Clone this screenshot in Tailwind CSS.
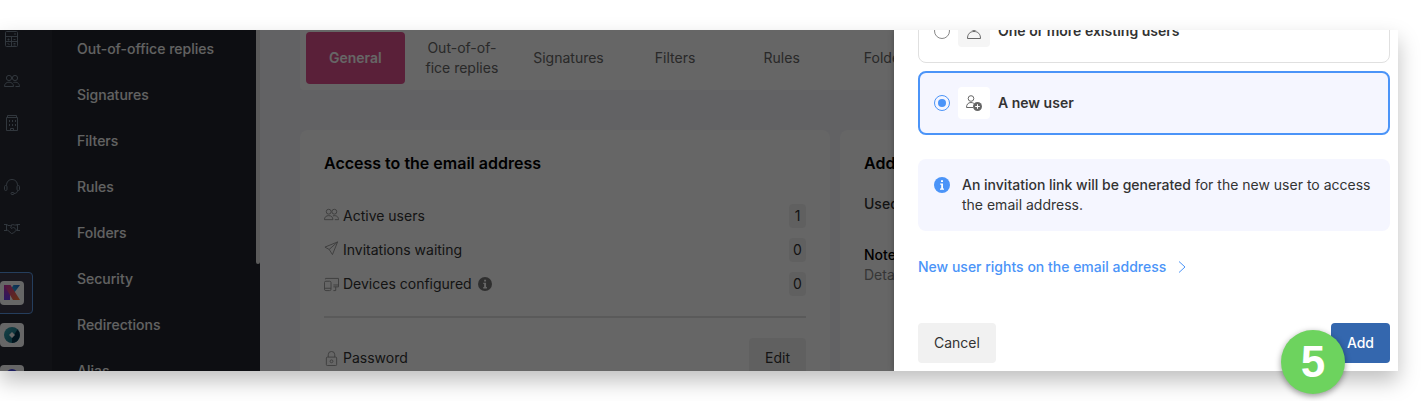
<!DOCTYPE html>
<html lang="en">
<head>
    <meta charset="UTF-8">
    <meta name="viewport" content="width=device-width, initial-scale=1.0">
    <title>Email address</title>
    <script src="https://cdn.jsdelivr.net/npm/@tailwindcss/browser@4"></script>
</head>

<body class="relative flex h-screen overflow-hidden bg-white py-[30px] pr-[30px] font-[Inter,'Liberation_Sans',sans-serif] text-sm text-[#333]">

    <!-- shared icons -->
    <svg class="hidden">
        <symbol id="users" viewBox="0 0 16 16" fill="none" stroke="currentColor">
            <circle cx="5" cy="5" r="2.6" />
            <circle cx="11" cy="5" r="2.6" />
            <path d="M.5 13.500c0-2.800 1.800-4.300 4.500-4.300s4.500 1.500 4.500 4.300zM9.500 9.500c3.500-1 6 .8 6 4h-4" />
        </symbol>
    </svg>

    <div class="relative flex min-w-0 flex-1 overflow-hidden shadow-[0_10px_20px_rgba(0,0,0,0.25)]">

        <!-- icon rail -->
        <nav class="w-[52px] shrink-0 bg-[#282c36] text-[#7c8998]">
            <div class="-mt-3 -ml-[9px] flex w-[42px] flex-col">
                <a href="#" aria-label="Accounting" class="flex h-[42px] items-center justify-center">
                    <svg class="size-4" viewBox="0 0 16 16" fill="none" stroke="currentColor">
                        <rect x="1.500" y=".5" width="12" height="15" rx="1" />
                        <path d="M1.500 5.500h12M7.500 5.500v10M1.500 10.500h12M10 3h2M3.500 8.500h2M4.500 7.500v2M9.500 8.500h2M3.500 12.500l2 1M9.500 12.500h2M9.500 14h2" />
                    </svg>
                </a>
                <a href="#" aria-label="Users" class="flex h-[42px] items-center justify-center">
                    <svg class="size-4"><use href="#users" /></svg>
                </a>
                <a href="#" aria-label="Organisation" class="flex h-[42px] items-center justify-center">
                    <svg class="size-4" viewBox="0 0 16 16" fill="none" stroke="currentColor">
                        <path d="M2.500 2.500h11v13h-11zM3.500 2.500v-2h9v2M6.500 15.500v-2h3v2" />
                        <path d="M5.500 5v2M8.500 5v2M11.500 5v2M5.500 9v2M8.500 9v2M11.500 9v2" />
                    </svg>
                </a>
                <a href="#" aria-label="Support" class="mt-[22px] flex h-[42px] items-center justify-center">
                    <svg class="size-4" viewBox="0 0 16 16" fill="none" stroke="currentColor">
                        <path d="M2.500 6.500C2.500 2.800 4.800.5 8 .5s5.500 2.300 5.500 6M13.500 11.500c0 2-1.500 3-3.500 3" />
                        <rect x=".5" y="6.500" width="2.500" height="5" rx="1.200" />
                        <rect x="13" y="6.500" width="2.500" height="5" rx="1.200" />
                        <rect x="7" y="13.500" width="3" height="2" rx="1" />
                    </svg>
                </a>
                <a href="#" aria-label="Partners" class="flex h-[42px] items-center justify-center">
                    <svg class="size-4" viewBox="0 0 16 16" fill="none" stroke="currentColor">
                        <path d="M0 3.500h3.500M2.500 3.500v6M0 9.500h3.500M12.500 3.500H16M13.500 3.500v6M12.500 9.500H16" />
                        <path d="M3.500 4.500h3l2-1 2 .5h2.500M3.500 9l4 3.500 2-.5 3-3M8 4L6.500 6.500l1.500 1L9.500 6l3 3" />
                    </svg>
                </a>
                <a href="#" aria-label="kSuite" class="mt-[22px] flex h-[42px] items-center justify-center rounded border border-[#5c9be8] bg-[#3c3a4c]">
                    <span class="flex size-6 items-center justify-center rounded bg-white">
                        <svg class="size-4" viewBox="0 0 16 16">
                            <defs>
                                <linearGradient id="kBar" x1="0" y1="0" x2="0" y2="1">
                                    <stop offset="0" stop-color="#c82ea8" />
                                    <stop offset="1" stop-color="#6a3df0" />
                                </linearGradient>
                                <linearGradient id="kLeg" x1="0" y1="0" x2="1" y2="1">
                                    <stop offset="0" stop-color="#c82eb0" />
                                    <stop offset="1" stop-color="#ff7a2c" />
                                </linearGradient>
                                <linearGradient id="kArm" x1="1" y1="0" x2="0" y2="1">
                                    <stop offset="0" stop-color="#1b62c8" />
                                    <stop offset="1" stop-color="#31c2ee" />
                                </linearGradient>
                            </defs>
                            <path fill="url(#kBar)" d="M0 0h6v15H0z" />
                            <path fill="url(#kArm)" d="M9.500 0H16l-6 8-3-4z" />
                            <path fill="url(#kLeg)" d="M0 0h6.500L16 15H9z" />
                        </svg>
                    </span>
                </a>
                <a href="#" aria-label="Hosting" class="flex h-[42px] items-center justify-center">
                    <span class="flex size-6 items-center justify-center rounded bg-white">
                        <svg class="size-4" viewBox="0 0 16 16">
                            <defs>
                                <linearGradient id="ring" x1="0" y1="0" x2="1" y2="1">
                                    <stop offset="0" stop-color="#3aa6b4" />
                                    <stop offset="1" stop-color="#0f6478" />
                                </linearGradient>
                            </defs>
                            <circle cx="8" cy="8" r="8" fill="url(#ring)" />
                            <path fill="#06344a" d="M8 11l5.500-8.500A8 8 0 0 1 8 16z" />
                            <path fill="#fff" d="M8 5l3 3-3 3-3-3z" />
                        </svg>
                    </span>
                </a>
                <a href="#" aria-label="Drive" class="flex h-[42px] items-center justify-center">
                    <span class="flex size-6 items-center justify-center rounded bg-white">
                        <svg class="size-4" viewBox="0 0 16 16"><circle cx="8" cy="6" r="6" fill="#4a4cf0" /></svg>
                    </span>
                </a>
            </div>
        </nav>

        <!-- sub menu -->
        <nav class="relative w-[208px] shrink-0 bg-[#22252f] font-medium text-[#f5f5f5]">
            <ul class="-mt-1 pl-[25px] leading-[46px]">
                <li><a href="#">Out-of-office replies</a></li>
                <li><a href="#">Signatures</a></li>
                <li><a href="#">Filters</a></li>
                <li><a href="#">Rules</a></li>
                <li><a href="#">Folders</a></li>
                <li><a href="#">Security</a></li>
                <li><a href="#">Redirections</a></li>
                <li><a href="#">Alias</a></li>
            </ul>
            <div class="absolute top-0 right-0 h-[234px] w-1 rounded-b-xs bg-[#e0e0e0]"></div>
        </nav>

        <!-- page -->
        <main class="min-w-0 flex-1 bg-[#f5f5fa] pr-7 pl-10">
            <nav class="grid grid-cols-10 gap-2 rounded-b bg-white px-[6px] pt-[2px] pb-[6px] text-center leading-5 text-[#666]">
                <a href="#" class="flex h-[52px] items-center justify-center rounded bg-[#e1508e] font-semibold text-white">General</a>
                <a href="#" class="flex items-center justify-center">Out-of-of-<br>fice replies</a>
                <a href="#" class="flex items-center justify-center">Signatures</a>
                <a href="#" class="flex items-center justify-center">Filters</a>
                <a href="#" class="flex items-center justify-center">Rules</a>
                <a href="#" class="flex items-center justify-center">Folders</a>
            </nav>

            <div class="mt-10 grid grid-cols-2 gap-[10px]">
                <section class="rounded-lg bg-white px-6 pt-[21px] pb-6">
                    <h2 class="text-base font-semibold text-black">Access to the email address</h2>
                    <ul class="mt-[29px] flex flex-col gap-[10px]">
                        <li class="flex h-6 items-center">
                            <svg class="mr-1 mb-1 size-[15px] text-[#999]"><use href="#users" /></svg>
                            Active users
                            <span class="ml-auto w-[17px] rounded bg-[#f1f1f1] text-center leading-6">1</span>
                        </li>
                        <li class="flex h-6 items-center">
                            <svg class="mr-1 mb-1 size-[15px] text-[#999]" viewBox="0 0 16 16" fill="none" stroke="currentColor">
                                <path d="M14.500 1L1 6.500l4.500 2.500L9 14.500zM14.500 1l-9 8" />
                            </svg>
                            Invitations waiting
                            <span class="ml-auto w-[17px] rounded bg-[#f1f1f1] text-center leading-6">0</span>
                        </li>
                        <li class="flex h-6 items-center">
                            <svg class="mr-1 size-[15px] text-[#999]" viewBox="0 0 16 16" fill="none" stroke="currentColor">
                                <rect x=".5" y="4.500" width="7" height="10" rx="1.500" />
                                <path d="M.5 12h7M1.500 2.500v-1h14v9h-5.500M10 8.500h5.500M12.500 10.500v4H10" />
                            </svg>
                            Devices configured
                            <svg class="ml-[6px] size-[14px]" viewBox="0 0 16 16">
                                <circle cx="8" cy="8" r="8" fill="#777" />
                                <path fill="#fff" d="M7 3h2.200v2.200H7zM6 6.500h3.200v5h1V13H6v-1.500h1V8H6z" />
                            </svg>
                            <span class="ml-auto w-[17px] rounded bg-[#f1f1f1] text-center leading-6">0</span>
                        </li>
                    </ul>
                    <hr class="mt-5 border-t-2 border-[#e0e0e0]">
                    <div class="mt-5 flex h-10 items-center">
                        <svg class="mr-1 size-[15px] text-[#999]" viewBox="0 0 16 16" fill="none" stroke="currentColor">
                            <rect x="2.500" y="6.500" width="11" height="9" rx="1" />
                            <path d="M4.500 6.500V4a3.500 3.500 0 0 1 7 0v2.500" />
                            <circle cx="8" cy="11" r="1.500" />
                        </svg>
                        Password
                        <button type="button" class="ml-auto h-10 rounded bg-[#f1f1f1] px-4">Edit</button>
                    </div>
                </section>

                <section class="rounded-lg bg-white px-6 pt-[21px] pb-6 leading-5">
                    <h2 class="text-base font-semibold text-black">Address</h2>
                    <p class="mt-[19px] font-medium">Used</p>
                    <p class="mt-[31px] font-medium text-black">Notes</p>
                    <p class="text-[#888]">Details</p>
                </section>
            </div>
        </main>

        <div class="absolute inset-0 bg-black/60"></div>

        <!-- drawer -->
        <form class="absolute inset-y-0 right-0 w-[504px] bg-white pr-2 pl-6 shadow-[0_0_6px_rgba(0,0,0,0.3)]">
            <div class="-mt-[31px] flex flex-col gap-2 font-semibold">
                <label class="flex h-16 items-center gap-2 rounded-lg border border-[#e0e0e0] px-[15px]">
                    <input type="radio" name="target" class="size-4 appearance-none rounded-full border border-[#888]">
                    <span class="flex size-8 items-center justify-center rounded bg-[#f5f5f5]">
                        <svg class="size-4" viewBox="0 0 16 16" fill="none" stroke="#666">
                            <circle cx="8" cy="4" r="3.500" />
                            <path d="M1.500 15.500c0-4.500 2.500-7 6.500-7s6.500 2.500 6.500 7z" />
                        </svg>
                    </span>
                    One or more existing users
                </label>
                <label class="flex h-16 items-center gap-2 rounded-lg border-2 border-[#4b94f8] bg-[#f5f6ff] px-[14px]">
                    <input type="radio" name="target" checked class="size-4 appearance-none rounded-full border border-[#4b94f8] bg-[#4b94f8] bg-clip-content p-[3px]">
                    <span class="flex size-8 items-center justify-center rounded bg-white">
                        <svg class="size-4" viewBox="0 0 16 16" fill="none" stroke="#666">
                            <circle cx="5" cy="3.500" r="2.800" />
                            <path d="M7 12.500H.5c0-3 1.500-5 4.500-5 1 0 2 .3 2.800.8" />
                            <circle cx="11.500" cy="11.500" r="4.500" fill="#666" stroke="none" />
                            <path stroke="#fff" d="M11.500 9.200v4.600M9.200 11.500h4.600" />
                        </svg>
                    </span>
                    A new user
                </label>
            </div>

            <div class="mt-6 flex gap-3 rounded-lg bg-[#f5f6ff] p-4 leading-5">
                <svg class="mt-[2px] size-4 shrink-0" viewBox="0 0 16 16">
                    <circle cx="8" cy="8" r="8" fill="#4b94f8" />
                    <path fill="#fff" d="M7 3.200h2v1.900H7zM6.200 6.500H9v5h1v1.200H6v-1.200h1.200V7.700h-1z" />
                </svg>
                <p><strong class="font-medium">An invitation link will be generated</strong> for the new user to access the email address.</p>
            </div>

            <a href="#" class="mt-[26px] flex items-center gap-3 leading-5 font-medium text-[#4b94f8]">
                New user rights on the email address
                <svg class="h-3 w-2" viewBox="0 0 8 12" fill="none" stroke="currentColor"><path d="M1 .5L7 6l-6 5.500" /></svg>
            </a>

            <div class="mt-[46px] flex justify-between">
                <button type="button" class="h-10 rounded bg-[#f1f1f1] px-4">Cancel</button>
                <button type="submit" class="h-10 rounded bg-[#3467ae] px-4 font-medium text-white">Add</button>
            </div>
        </form>
    </div>

    <!-- step marker -->
    <div class="absolute right-[83px] bottom-[7px] flex size-16 items-center justify-center rounded-full bg-[#6dd35e] font-['Liberation_Sans',sans-serif] text-[44px] font-bold text-white shadow-[0_2px_6px_rgba(0,0,0,0.4)]">5</div>
</body>

</html>
